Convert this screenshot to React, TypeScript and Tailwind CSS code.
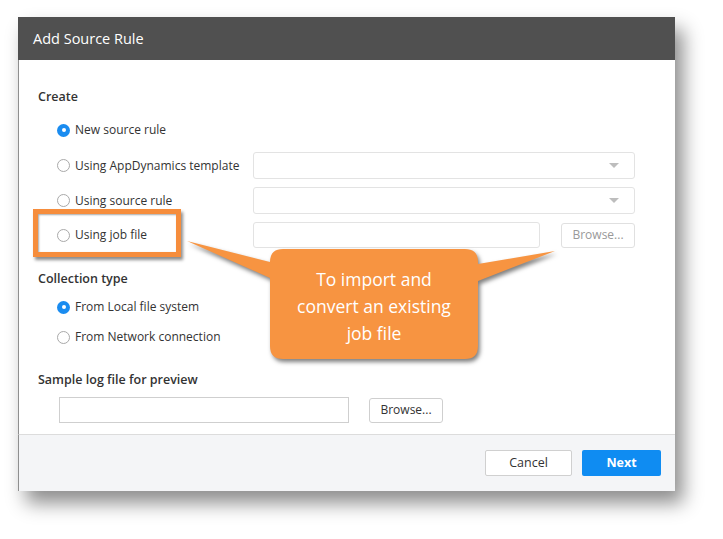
import type { ReactNode } from "react";

const font = { fontFamily: '"Open Sans", "Noto Sans", sans-serif' };

type RadioProps = {
  label: string;
  checked?: boolean;
};

function Radio({ label, checked = false }: RadioProps) {
  return (
    <div className="flex items-center gap-[5px]">
      {checked ? (
        <span className="flex h-[13px] w-[13px] items-center justify-center rounded-full bg-[#1a8cf0]">
          <span className="h-[4px] w-[4px] rounded-full bg-white" />
        </span>
      ) : (
        <span className="h-[13px] w-[13px] rounded-full border border-[#a9a9a9] bg-white" />
      )}
      <span className="text-[12px] text-[#333]">{label}</span>
    </div>
  );
}

function SelectBox() {
  return (
    <div className="flex h-full flex-1 items-center justify-end rounded-[3px] border border-[#e3e3e3] bg-white pr-[15px]">
      <span className="h-0 w-0 border-x-[5px] border-t-[5px] border-x-transparent border-t-[#bdbdbd]" />
    </div>
  );
}

function Label({ children }: { children: ReactNode }) {
  return <div className="flex h-[20px] items-center pl-[19px] text-[12.5px] font-semibold text-[#333]">{children}</div>;
}

export default function App() {
  return (
    <div className="relative h-[539px] w-[723px] overflow-hidden bg-white" style={font}>
      <div className="pl-[18px] pt-[17px]">
        <div className="flex h-[474px] w-[657px] flex-col bg-white shadow-[8px_12px_18px_rgba(0,0,0,0.45)]">
          <div className="flex h-[43px] items-center bg-[#505050] pl-[15px] text-[14.5px] text-white">Add Source Rule</div>

          <div className="flex flex-1 flex-col border-l border-[#8f8f8f] pr-[40px]">
            <div className="mt-[27px]">
              <Label>Create</Label>
            </div>
            <div className="mt-[10px] flex h-[26px] items-center pl-[38px]">
              <Radio label="New source rule" checked />
            </div>
            <div className="mt-[9px] flex h-[27px] items-center pl-[38px]">
              <div className="w-[196px]">
                <Radio label="Using AppDynamics template" />
              </div>
              <SelectBox />
            </div>
            <div className="mt-[8px] flex h-[27px] items-center pl-[38px]">
              <div className="w-[196px]">
                <Radio label="Using source rule" />
              </div>
              <SelectBox />
            </div>
            <div className="mt-[8px] flex h-[26px] items-center pl-[38px]">
              <div className="w-[196px]">
                <Radio label="Using job file" />
              </div>
              <div className="h-full flex-1 rounded-[3px] border border-[#e3e3e3] bg-white" />
              <div className="ml-[21px] flex h-[25px] w-[74px] items-center justify-center rounded-[3px] border border-[#e0e0e0] bg-white text-[12px] text-[#999]">
                Browse...
              </div>
            </div>
            <div className="mt-[21px]">
              <Label>Collection type</Label>
            </div>
            <div className="mt-[8px] flex h-[20px] items-center pl-[38px]">
              <Radio label="From Local file system" checked />
            </div>
            <div className="mt-[10px] flex h-[20px] items-center pl-[38px]">
              <Radio label="From Network connection" />
            </div>
            <div className="mt-[23px]">
              <Label>Sample log file for preview</Label>
            </div>
            <div className="mt-[7px] flex h-[26px] items-center gap-[20px] pl-[40px]">
              <div className="h-full w-[290px] border border-[#cfcfcf] bg-white" />
              <div className="flex h-[25px] w-[74px] items-center justify-center rounded-[3px] border border-[#cfcfcf] bg-white text-[12px] text-[#333]">
                Browse...
              </div>
            </div>
          </div>

          <div className="flex h-[57px] items-center justify-end gap-[10px] border-l border-t border-[#dcdcdc] border-l-[#8f8f8f] bg-[#f4f5f7] pr-[14px]">
            <button
              type="button"
              className="flex h-[26px] w-[87px] items-center justify-center rounded-[2px] border border-[#d0d0d0] bg-white text-[12.5px] text-[#333]"
            >
              Cancel
            </button>
            <button
              type="button"
              className="flex h-[26px] w-[79px] items-center justify-center rounded-[2px] bg-[#0f8cf2] text-[12.5px] font-bold text-white"
            >
              Next
            </button>
          </div>
        </div>
      </div>

      {/* highlight around "Using job file" */}
      <div className="absolute left-[33px] top-[209px] h-[48px] w-[148px] border-[5px] border-[#f68d3c] shadow-[2px_3px_3px_rgba(0,0,0,0.45),inset_1px_1px_2px_rgba(0,0,0,0.35)]" />

      {/* callout */}
      <svg
        className="absolute left-0 top-0 drop-shadow-[2px_3px_2px_rgba(0,0,0,0.5)]"
        width="723"
        height="539"
        viewBox="0 0 723 539"
      >
        <path
          d="M283 249 H465 Q478 249 478 262 V264 L555 251 L478 281 V346 Q478 359 465 359 H283 Q270 359 270 346 V278 L187 241 L270 262 Q270 249 283 249 Z"
          fill="#f79441"
        />
      </svg>
      <div className="absolute left-[270px] top-[266px] w-[208px] text-center text-[17.5px] leading-[27px] text-white">
        To import and
        <br />
        convert an existing
        <br />
        job file
      </div>
    </div>
  );
}
